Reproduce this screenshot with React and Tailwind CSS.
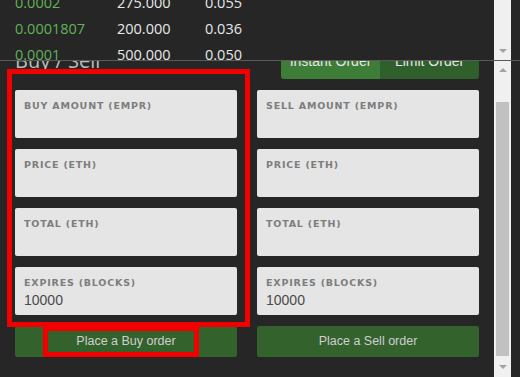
import React from 'react';

const rows = [
    { price: '0.0002', amount: '275.000', total: '0.055' },
    { price: '0.0001807', amount: '200.000', total: '0.036' },
    { price: '0.0001', amount: '500.000', total: '0.050' },
];

function Field({ label, value }) {
    return (
        <div className="h-[48px] rounded-[2px] bg-[#e5e5e5] px-[9px] pt-[9px]">
            <div className="font-['DejaVu_Sans',sans-serif] text-[9.5px] font-bold leading-[14px] tracking-[0.8px] text-[#7d7d7d]">
                {label}
            </div>
            {value && (
                <div className="mt-[2px] font-['Liberation_Sans',Arial,sans-serif] text-[14px] leading-[16px] text-[#4a4a4a]">
                    {value}
                </div>
            )}
        </div>
    );
}

function Scrollbar({ thumb }) {
    return (
        <div className="flex w-[17px] shrink-0 flex-col items-center bg-[#f0f0f0]">
            {thumb ? (
                <>
                    <div className="flex h-[17px] items-center justify-center">
                        <div className="h-0 w-0 border-x-[4px] border-b-[4px] border-x-transparent border-b-[#a3a3a3]" />
                    </div>
                    <div className="mt-[24px] h-[254px] w-[13px] bg-[#c1c1c1]" />
                    <div className="flex flex-1 items-center justify-center">
                        <div className="h-0 w-0 border-x-[4px] border-t-[4px] border-x-transparent border-t-[#a3a3a3]" />
                    </div>
                </>
            ) : (
                <div className="mt-auto flex h-[17px] items-center justify-center pb-[2px]">
                    <div className="h-0 w-0 border-x-[4px] border-t-[4px] border-x-transparent border-t-[#a3a3a3]" />
                </div>
            )}
        </div>
    );
}

export default function App() {
    const left = [
        { label: 'BUY AMOUNT (EMPR)' },
        { label: 'PRICE (ETH)' },
        { label: 'TOTAL (ETH)' },
        { label: 'EXPIRES (BLOCKS)', value: '10000' },
    ];
    const right = [
        { label: 'SELL AMOUNT (EMPR)' },
        { label: 'PRICE (ETH)' },
        { label: 'TOTAL (ETH)' },
        { label: 'EXPIRES (BLOCKS)', value: '10000' },
    ];

    return (
        <div className="relative flex h-[377px] w-[520px] flex-col overflow-hidden bg-[#262626]">
            {/* Order book (top) */}
            <div className="flex h-[60px] pr-[9px]">
                <div className="relative flex-1 overflow-hidden">
                    <div className="-mt-[10px] font-['Open_Sans',sans-serif] text-[14.5px]">
                        {rows.map((r) => (
                            <div key={r.price} className="flex h-[26px] items-center">
                                <span className="w-[117px] pl-[15px] text-[#5fb35a]">{r.price}</span>
                                <span className="w-[88px] text-[#e8e8e8]">{r.amount}</span>
                                <span className="text-[#e8e8e8]">{r.total}</span>
                            </div>
                        ))}
                    </div>
                </div>
                <Scrollbar />
            </div>

            <div className="h-px w-full bg-[#5a5a5a]" />

            {/* Buy / Sell panel */}
            <div className="flex flex-1 overflow-hidden pr-[9px]">
                <div className="flex-1 overflow-hidden">
                    <div className="-mt-[12px] px-[15px]">
                        <div className="flex h-[30px] items-start justify-between">
                            <div className="-mt-[1px] font-['Open_Sans',sans-serif] text-[20px] leading-[26px] text-[#bdbdbd]">
                                Buy / Sell
                            </div>
                            <div className="flex h-[30px] w-[198px] overflow-hidden rounded-[3px] font-['Liberation_Sans',Arial,sans-serif] text-[14px] text-[#e6e6e6]">
                                <div className="flex flex-1 items-center justify-center bg-[#3e7d37] pb-[6px]">Instant Order</div>
                                <div className="flex flex-1 items-center justify-center bg-[#2f5f2a] pb-[6px]">Limit Order</div>
                            </div>
                        </div>

                        <div className="mt-[11px] grid grid-cols-2 gap-x-[20px]">
                            <div className="flex flex-col gap-[11px]">
                                {left.map((f) => (
                                    <Field key={f.label} {...f} />
                                ))}
                                <button className="h-[31px] rounded-[2px] bg-[#33622d] font-['Liberation_Sans',Arial,sans-serif] text-[12.5px] text-[#cfcfcf]">
                                    Place a Buy order
                                </button>
                            </div>
                            <div className="flex flex-col gap-[11px]">
                                {right.map((f) => (
                                    <Field key={f.label} {...f} />
                                ))}
                                <button className="h-[31px] rounded-[2px] bg-[#33622d] font-['Liberation_Sans',Arial,sans-serif] text-[12.5px] text-[#cfcfcf]">
                                    Place a Sell order
                                </button>
                            </div>
                        </div>
                    </div>
                </div>
                <Scrollbar thumb />
            </div>

            {/* Red annotation boxes */}
            <div className="pointer-events-none absolute left-[7px] top-[69px] h-[258px] w-[243px] border-[5px] border-[#f20000]" />
            <div className="pointer-events-none absolute left-[43px] top-[326px] h-[31px] w-[156px] border-[5px] border-[#f20000]" />
        </div>
    );
}
